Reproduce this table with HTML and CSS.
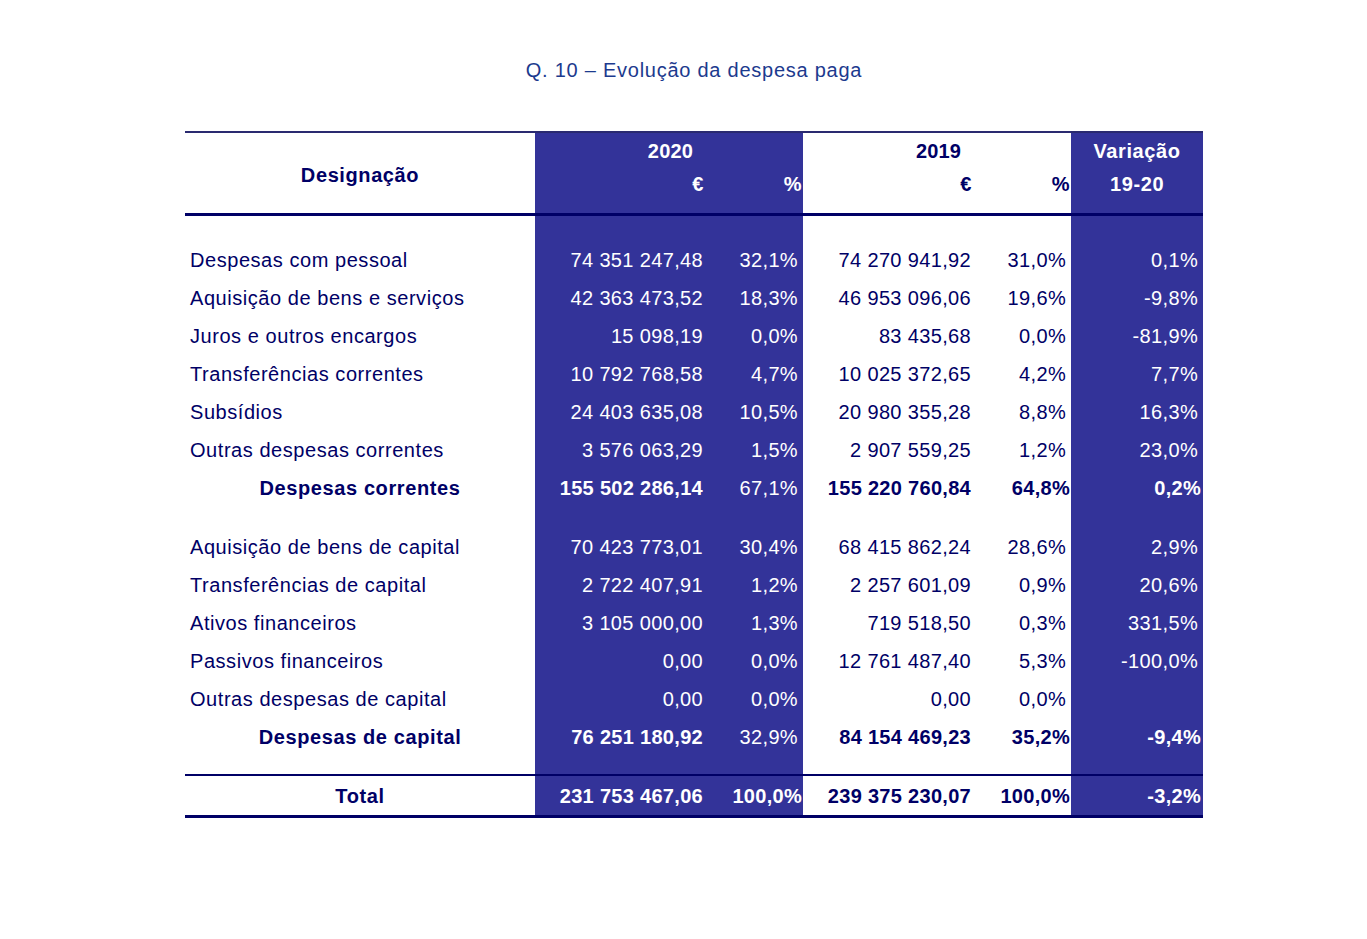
FILE: index.html
```html
<!DOCTYPE html>
<html lang="pt">
<head>
<meta charset="utf-8">
<title>Q. 10 – Evolução da despesa paga</title>
<link rel="stylesheet" href="styles.css">
</head>
<body>
<div class="page">
  <h1 class="title">Q. 10 – Evolução da despesa paga</h1>
  <table class="tbl">
    <colgroup>
      <col class="c-lab"><col class="c-eur"><col class="c-pct"><col class="c-eur"><col class="c-pct"><col class="c-var">
    </colgroup>
    <thead>
      <tr class="h1">
        <th rowspan="2" class="hlab">Designação</th>
        <th colspan="2" class="b hyear">2020</th>
        <th colspan="2" class="w hyear">2019</th>
        <th class="b hvar">Variação</th>
      </tr>
      <tr class="h2">
        <th class="b r">€</th>
        <th class="b r t">%</th>
        <th class="w r">€</th>
        <th class="w r t">%</th>
        <th class="b hvar">19-20</th>
      </tr>
    </thead>
    <tbody>
      <tr class="sp sp1"><td></td><td class="b"></td><td class="b"></td><td></td><td></td><td class="b"></td></tr>
      <tr><td class="lab">Despesas com pessoal</td><td class="b n">74 351 247,48</td><td class="b n">32,1%</td><td class="n">74 270 941,92</td><td class="n">31,0%</td><td class="b n">0,1%</td></tr>
      <tr><td class="lab">Aquisição de bens e serviços</td><td class="b n">42 363 473,52</td><td class="b n">18,3%</td><td class="n">46 953 096,06</td><td class="n">19,6%</td><td class="b n">-9,8%</td></tr>
      <tr><td class="lab">Juros e outros encargos</td><td class="b n">15 098,19</td><td class="b n">0,0%</td><td class="n">83 435,68</td><td class="n">0,0%</td><td class="b n">-81,9%</td></tr>
      <tr><td class="lab">Transferências correntes</td><td class="b n">10 792 768,58</td><td class="b n">4,7%</td><td class="n">10 025 372,65</td><td class="n">4,2%</td><td class="b n">7,7%</td></tr>
      <tr><td class="lab">Subsídios</td><td class="b n">24 403 635,08</td><td class="b n">10,5%</td><td class="n">20 980 355,28</td><td class="n">8,8%</td><td class="b n">16,3%</td></tr>
      <tr><td class="lab">Outras despesas correntes</td><td class="b n">3 576 063,29</td><td class="b n">1,5%</td><td class="n">2 907 559,25</td><td class="n">1,2%</td><td class="b n">23,0%</td></tr>
      <tr><td class="lab sub">Despesas correntes</td><td class="b n bold">155 502 286,14</td><td class="b n">67,1%</td><td class="n bold">155 220 760,84</td><td class="n bold t">64,8%</td><td class="b n bold t2">0,2%</td></tr>
      <tr class="sp sp2"><td></td><td class="b"></td><td class="b"></td><td></td><td></td><td class="b"></td></tr>
      <tr><td class="lab">Aquisição de bens de capital</td><td class="b n">70 423 773,01</td><td class="b n">30,4%</td><td class="n">68 415 862,24</td><td class="n">28,6%</td><td class="b n">2,9%</td></tr>
      <tr><td class="lab">Transferências de capital</td><td class="b n">2 722 407,91</td><td class="b n">1,2%</td><td class="n">2 257 601,09</td><td class="n">0,9%</td><td class="b n">20,6%</td></tr>
      <tr><td class="lab">Ativos financeiros</td><td class="b n">3 105 000,00</td><td class="b n">1,3%</td><td class="n">719 518,50</td><td class="n">0,3%</td><td class="b n">331,5%</td></tr>
      <tr><td class="lab">Passivos financeiros</td><td class="b n">0,00</td><td class="b n">0,0%</td><td class="n">12 761 487,40</td><td class="n">5,3%</td><td class="b n">-100,0%</td></tr>
      <tr><td class="lab">Outras despesas de capital</td><td class="b n">0,00</td><td class="b n">0,0%</td><td class="n">0,00</td><td class="n">0,0%</td><td class="b n"></td></tr>
      <tr><td class="lab sub">Despesas de capital</td><td class="b n bold">76 251 180,92</td><td class="b n">32,9%</td><td class="n bold">84 154 469,23</td><td class="n bold t">35,2%</td><td class="b n bold t2">-9,4%</td></tr>
      <tr class="sp sp3"><td></td><td class="b"></td><td class="b"></td><td></td><td></td><td class="b"></td></tr>
    </tbody>
    <tfoot>
      <tr class="tot"><td class="lab sub">Total</td><td class="b n bold">231 753 467,06</td><td class="b n bold t">100,0%</td><td class="n bold">239 375 230,07</td><td class="n bold t">100,0%</td><td class="b n bold t2">-3,2%</td></tr>
    </tfoot>
  </table>
</div>
</body>
</html>
```
FILE: styles.css
```css
html, body {
  margin: 0;
  padding: 0;
  background: #ffffff;
}
body {
  font-family: "Liberation Sans", Arial, sans-serif;
}
.page {
  width: 1018px;
  margin-left: 185px;
  padding-top: 58px;
}
.title {
  margin: 0;
  height: 73px;
  text-align: center;
  font-size: 20px;
  line-height: 24px;
  font-weight: normal;
  letter-spacing: 0.75px;
  color: #1c3a8e;
}
.tbl {
  width: 1018px;
  table-layout: fixed;
  border-collapse: separate;
  border-spacing: 0;
  font-size: 20px;
  color: #000066;
}
.c-lab { width: 350px; }
.c-eur { width: 173px; }
.c-pct { width: 95px; }
.c-var { width: 132px; }

.tbl th, .tbl td {
  padding: 0 5px;
  white-space: nowrap;
  overflow: visible;
}
.b {
  background: #333399;
  color: #ffffff;
}
.w {
  background: #ffffff;
}

/* header */
.tbl thead th {
  font-weight: bold;
  letter-spacing: 0.6px;
}
.h1 th {
  border-top: 2px solid #2a2a70;
  height: 35px;
  line-height: 22px;
  vertical-align: middle;
  padding-top: 0;
  padding-bottom: 0;
}
.h2 th {
  border-bottom: 3px solid #000066;
  line-height: 22px;
  padding-top: 5px;
  padding-bottom: 18px;
  vertical-align: top;
  letter-spacing: 0.2px;
}
.hlab {
  border-bottom: 3px solid #000066;
  text-align: center;
  padding-top: 4px !important;
  color: #000066;
}
.hyear { text-align: center; letter-spacing: 0.2px !important; padding-left: 8px !important; }
.hvar { text-align: center; }
.r { text-align: right; padding-right: 4px !important; }
.r.t { padding-right: 1px !important; }

/* body */
.tbl tbody td, .tbl tfoot td {
  line-height: 38px;
  height: 38px;
}
.lab {
  text-align: left;
  letter-spacing: 0.55px;
}
.lab.sub {
  text-align: center;
  font-weight: bold;
  letter-spacing: 0.6px;
}
.n {
  text-align: right;
  letter-spacing: 0.35px;
  padding-right: 5px;
}
.bold {
  font-weight: bold;
  letter-spacing: 0.3px;
}
.n.t { padding-right: 1px; }
.n.t2 { padding-right: 2px; }

.tbl tbody tr.sp td {
  height: 0;
  line-height: 0;
  padding: 0;
}
.tbl tbody tr.sp1 td { height: 25px; }
.tbl tbody tr.sp2 td { height: 21px; }
.tbl tbody tr.sp3 td { height: 18px; }

.tot td {
  border-top: 2px solid #000066;
  border-bottom: 3px solid #000066;
  height: 37px !important;
  line-height: 37px !important;
  padding-top: 2px !important;
  padding-bottom: 0 !important;
  vertical-align: top;
}
.tot td.lab { padding-left: 5px; padding-right: 5px; }
.tot td.n { padding-top: 2px; }
```
